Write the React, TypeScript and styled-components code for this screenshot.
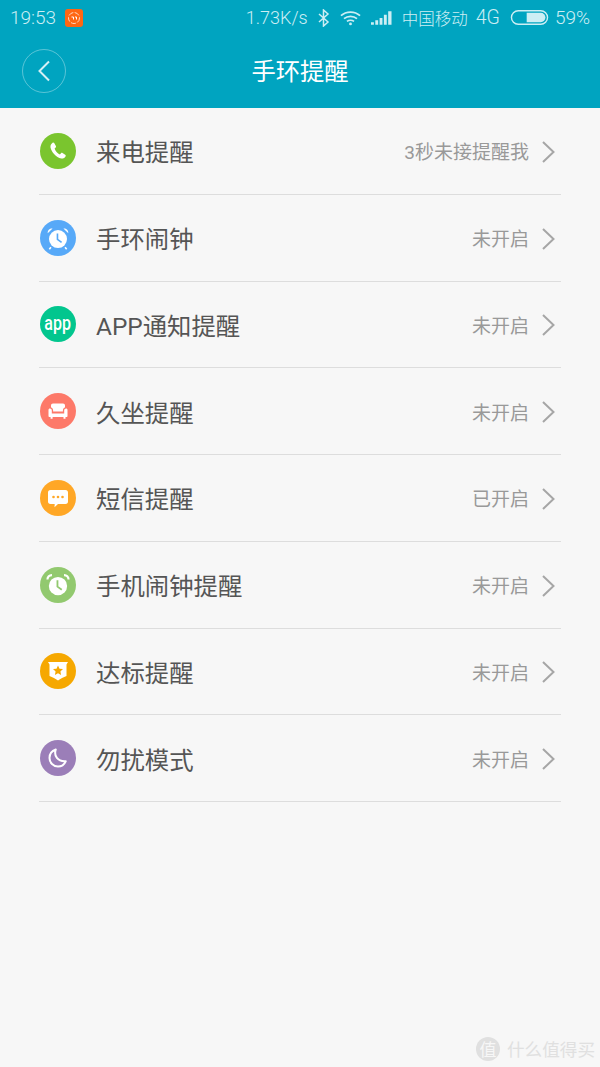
import { FunctionComponent, ReactNode } from 'react';
import styled, { createGlobalStyle } from 'styled-components';

const GlobalStyle = createGlobalStyle`
    html, body {
        margin: 0;
        padding: 0;
        background: #f7f7f7;
    }
    * {
        box-sizing: border-box;
    }
`;

const FONT = `Roboto, "Noto Sans CJK SC", sans-serif`;

const Page = styled.div`
    position: relative;
    width: 600px;
    height: 1067px;
    overflow: hidden;
    background: #f7f7f7;
    font-family: ${FONT};
`;

const Top = styled.header`
    height: 108px;
    background: #00a4c0;
`;

const StatusBar = styled.div`
    display: flex;
    align-items: center;
    justify-content: space-between;
    height: 35px;
    padding: 0 10px;
    color: #cdeef4;
    font-size: 19px;
    font-weight: 300;
`;

const StatusGroup = styled.div`
    display: flex;
    align-items: center;
`;

const AppBadge = styled.span`
    display: flex;
    margin-left: 9px;
`;

const StatusText = styled.span<{ $left?: number; $size?: number }>`
    margin-left: ${props => props.$left ?? 0}px;
    font-size: ${props => props.$size ?? 19}px;
    white-space: nowrap;
`;

const StatusIcon = styled.svg<{ $left: number }>`
    display: block;
    margin-left: ${props => props.$left}px;
`;

const NavBar = styled.div`
    display: flex;
    align-items: center;
    justify-content: center;
    position: relative;
    height: 73px;
`;

const BackButton = styled.div`
    position: absolute;
    left: 22px;
    top: 14px;
    display: flex;
    align-items: center;
    justify-content: center;
    width: 44px;
    height: 44px;
    border: 1px solid rgba(255, 255, 255, 0.35);
    border-radius: 50%;
`;

const Title = styled.h1`
    margin: 0;
    color: #ffffff;
    font-size: 24.3px;
    font-weight: 400;
    line-height: 72px;
`;

const List = styled.ul`
    list-style: none;
    margin: 0;
    padding: 0 39px;
`;

const Row = styled.li`
    display: flex;
    align-items: center;
    height: 86.75px;
    padding: 0 6px 0 1px;
    border-bottom: 1px solid #dddddd;
`;

const IconCircle = styled.div<{ $color: string }>`
    display: flex;
    align-items: center;
    justify-content: center;
    flex: none;
    width: 36px;
    height: 36px;
    border-radius: 50%;
    background: ${props => props.$color};
    color: #ffffff;
`;

const AppLabel = styled.span`
    font-size: 20px;
    font-weight: 500;
    line-height: 36px;
    transform: scaleX(0.8);
    position: relative;
    top: -1px;
`;

const Label = styled.span`
    flex: 1;
    margin-left: 20px;
    color: #555555;
    font-size: 24.4px;
    white-space: nowrap;
`;

const Value = styled.span`
    margin-right: 12px;
    color: #999999;
    font-size: 19px;
    white-space: nowrap;
`;

const ChevronMark = styled.svg`
    display: block;
    position: relative;
    top: 1px;
`;

const Watermark = styled.div`
    position: absolute;
    right: 5px;
    bottom: 6px;
    display: flex;
    align-items: center;
    gap: 7px;
    color: #e0e0e0;
    font-size: 17.6px;
`;

const WatermarkBadge = styled.span`
    display: flex;
    align-items: center;
    justify-content: center;
    width: 24px;
    height: 24px;
    border-radius: 50%;
    background: #e0e0e0;
    color: #f7f7f7;
    font-size: 17px;
`;

const Chevron: FunctionComponent = () => (
    <ChevronMark width="14" height="22" viewBox="0 0 14 22" fill="none">
        <path d="M2 1l10.5 10L2 21" stroke="#a6a6a6" strokeWidth="2" />
    </ChevronMark>
);

const PhoneIcon = (
    <svg width="20" height="20" viewBox="0 0 20 20" fill="#fff">
        <path d="M4.6 1.8c.6-.4 1.2-.3 1.6.3l1.7 2.8c.3.5.2 1.100-.2 1.500L6.600 7.400c.6 2.300 2.900 4.900 5.300 6l1.100-1.200c.4-.4 1-.5 1.500-.2l2.700 1.800c.6.400.7 1.100.3 1.600-1 1.500-2.500 2.500-4.200 2.100C8 16.300 3.500 11.300 2.500 6.500 2.200 4.700 3.100 2.900 4.600 1.800z" />
    </svg>
);

const AlarmIcon = (
    <svg width="26" height="26" viewBox="0 0 24 24">
        <circle cx="12" cy="13" r="8.300" fill="#fff" />
        <path d="M2.500 7.500C2.300 4.800 4.300 3 7 3.200zM21.500 7.500C21.700 4.800 19.700 3 17 3.200z" fill="#fff" />
        <path d="M5.500 20.500L4 22.300M18.500 20.500L20 22.300" stroke="#fff" strokeWidth="1.500" />
        <path d="M11.500 7.800v5.400l3.800 2.800" fill="none" stroke="#57a9f8" strokeWidth="1.500" />
    </svg>
);

const SofaIcon = (
    <svg width="24" height="24" viewBox="0 0 24 24" fill="#fff">
        <path d="M7 4.500h10c1.200 0 2 .8 2 2v2.100c-1.300.3-2 1.200-2.100 2.700v1.200H7.100v-1.200C7 9.800 6.300 8.900 5 8.600V6.500c0-1.200.8-2 2-2z" />
        <path d="M2.500 11c0-1 .6-1.500 1.400-1.500 1.200 0 1.900.8 1.900 2v3h12.400v-3c0-1.200.7-2 1.900-2 .8 0 1.400.5 1.400 1.500v6c0 .6-.4 1-1 1h-1v1.800h-2v-1.800H6.600v1.800h-2v-1.800h-1c-.6 0-1.100-.4-1.100-1z" />
    </svg>
);

const MessageIcon = (
    <svg width="24" height="24" viewBox="0 0 24 24">
        <path d="M4.500 4h15c1.700 0 2.500 1 2.500 2.500v9c0 1.500-.8 2.500-2.500 2.500h-7.500l-3.500 3.200.2-3.200H4.500C2.800 18 2 17 2 15.500v-9C2 5 2.800 4 4.500 4z" fill="#fff" />
        <circle cx="7.500" cy="11" r="1.300" fill="#ffa726" />
        <circle cx="12" cy="11" r="1.300" fill="#ffa726" />
        <circle cx="16.500" cy="11" r="1.300" fill="#ffa726" />
    </svg>
);

const ClockIcon = (
    <svg width="28" height="28" viewBox="0 0 26 26">
        <circle cx="13" cy="14" r="8.500" fill="#fff" />
        <path d="M3.200 8C3.200 5.500 5 3.700 7.400 3.800M22.800 8c0-2.500-1.800-4.300-4.200-4.200" fill="none" stroke="#fff" strokeWidth="2" />
        <path d="M12.500 8.500v6l4 3" fill="none" stroke="#92c96f" strokeWidth="1.700" />
    </svg>
);

const BadgeIcon = (
    <svg width="22" height="24" viewBox="0 0 22 24">
        <path d="M1 3h20l-1.500 2.500V17c-3 1.300-6 2.700-8.500 4.500C8.500 19.700 5.500 18.300 2.500 17V5.500z" fill="#fff" />
        <path d="M11 6.500l1.500 3.200 3.500.4-2.600 2.400.7 3.500-3.100-1.800L7.900 16l.7-3.500L6 10.100l3.500-.4z" fill="#f6a800" />
    </svg>
);

const MoonIcon = (
    <svg width="24" height="24" viewBox="0 0 24 24" fill="none">
        <path d="M9.800 3.500C7.600 9.800 11.600 15.800 19.800 15.200 18.300 18.700 15.400 20.500 12 20.500 7.300 20.500 3.500 16.700 3.500 12c0-3.700 2.500-7.200 6.300-8.500z" stroke="#fff" strokeWidth="2" strokeLinejoin="round" />
    </svg>
);

type Reminder = {
    label: string;
    value: string;
    color: string;
    icon: ReactNode;
};

const reminders: Reminder[] = [
    { label: '来电提醒', value: '3秒未接提醒我', color: '#7ac52e', icon: PhoneIcon },
    { label: '手环闹钟', value: '未开启', color: '#57a9f8', icon: AlarmIcon },
    { label: 'APP通知提醒', value: '未开启', color: '#02c68e', icon: <AppLabel>app</AppLabel> },
    { label: '久坐提醒', value: '未开启', color: '#fd7969', icon: SofaIcon },
    { label: '短信提醒', value: '已开启', color: '#ffa726', icon: MessageIcon },
    { label: '手机闹钟提醒', value: '未开启', color: '#92c96f', icon: ClockIcon },
    { label: '达标提醒', value: '未开启', color: '#f6a800', icon: BadgeIcon },
    { label: '勿扰模式', value: '未开启', color: '#9b7eb8', icon: MoonIcon },
];

const App: FunctionComponent = () => (
    <Page>
        <GlobalStyle />
        <Top>
            <StatusBar>
                <StatusGroup>
                    <span>19:53</span>
                    <AppBadge>
                        <svg width="18" height="18" viewBox="0 0 18 18">
                            <rect width="18" height="18" rx="3" fill="#ff6612" />
                            <circle cx="9" cy="9" r="5.500" fill="none" stroke="#ffd9c2" strokeWidth="1" strokeDasharray="5 1.500" />
                            <path d="M6.500 8h2v2.500M10 8h1.500v2.500" fill="none" stroke="#fff" strokeWidth="1" />
                        </svg>
                    </AppBadge>
                </StatusGroup>
                <StatusGroup>
                    <StatusText $size={18}>1.73K/s</StatusText>
                    <StatusIcon $left={10} width="12" height="18" viewBox="0 0 12 18" fill="none">
                        <path d="M1 5l9 8-4.500 4V1L10 5l-9 8" stroke="#cdeef4" strokeWidth="1.500" />
                    </StatusIcon>
                    <StatusIcon $left={10} width="21" height="16" viewBox="0 0 22 16" fill="none">
                        <path d="M1 5.500c5.500-5 14.500-5 20 0M4.200 8.700c3.800-3.300 9.800-3.300 13.600 0M7.300 11.500c2-1.500 5.400-1.500 7.400 0" stroke="#cdeef4" strokeWidth="1.800" />
                        <circle cx="11" cy="14.200" r="1.500" fill="#cdeef4" />
                    </StatusIcon>
                    <StatusIcon $left={10} width="21" height="15" viewBox="0 0 22 15" fill="#cdeef4">
                        <path d="M0 12.500h3V15H0zM4.500 10.500h3V15h-3zM9 8h3v7H9zM13.500 4.500h3V15h-3zM18 1h3.500v14H18z" />
                    </StatusIcon>
                    <StatusText $left={10} $size={16.5}>中国移动</StatusText>
                    <StatusText $left={8} $size={19.5}>4G</StatusText>
                    <StatusIcon $left={10} width="39" height="15" viewBox="0 0 40 16" fill="none">
                        <rect x="0.750" y="0.750" width="38.500" height="14.500" rx="7.250" stroke="#cdeef4" strokeWidth="1.500" />
                        <path d="M17 3h15a5 5 0 0 1 0 10H17z" fill="#cdeef4" />
                    </StatusIcon>
                    <StatusText $left={6} $size={19}>59%</StatusText>
                </StatusGroup>
            </StatusBar>
            <NavBar>
                <BackButton>
                    <svg width="14" height="22" viewBox="0 0 14 22" fill="none">
                        <path d="M12 1.500L2.500 11l9.500 9.500" stroke="#d5f0f5" strokeWidth="2" />
                    </svg>
                </BackButton>
                <Title>手环提醒</Title>
            </NavBar>
        </Top>
        <List>
            {reminders.map(({ label, value, color, icon }) => (
                <Row key={label}>
                    <IconCircle $color={color}>{icon}</IconCircle>
                    <Label>{label}</Label>
                    <Value>{value}</Value>
                    <Chevron />
                </Row>
            ))}
        </List>
        <Watermark>
            <WatermarkBadge>值</WatermarkBadge>
            <span>什么值得买</span>
        </Watermark>
    </Page>
);

export default App;
